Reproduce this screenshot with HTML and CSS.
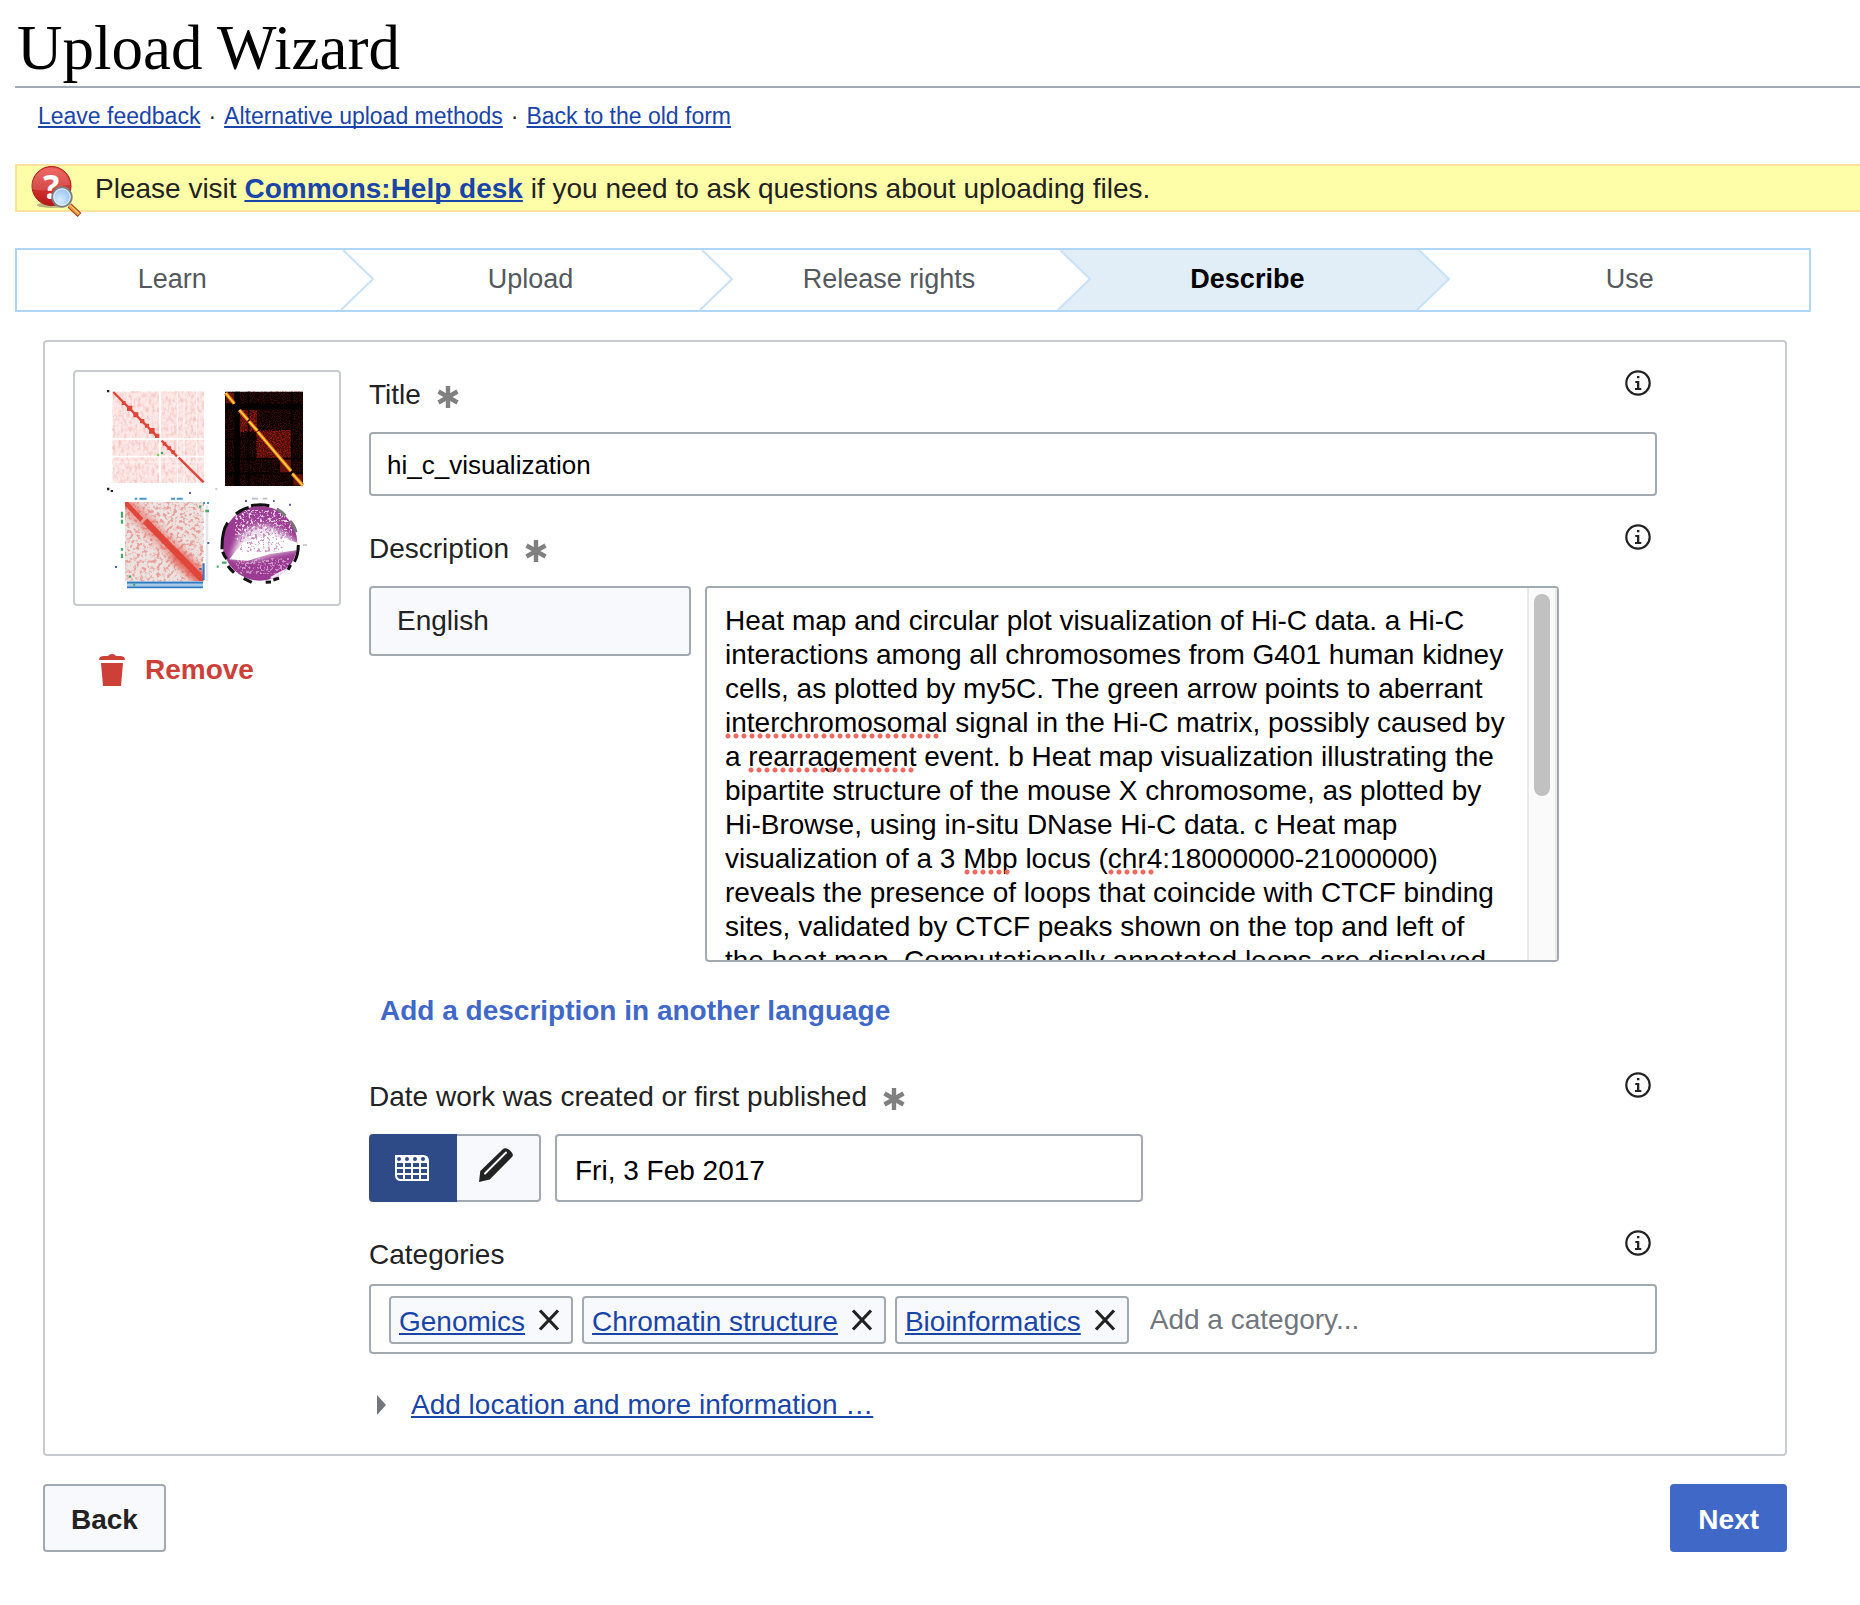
FILE: index.html
```
<!DOCTYPE html>
<html lang="en">
<head>
<meta charset="utf-8">
<meta name="viewport" content="width=device-width, initial-scale=1">
<title>Upload Wizard</title>
<link rel="stylesheet" href="styles.css">
</head>
<body>
<svg class="sprite" aria-hidden="true">
  <symbol id="icon-info" viewBox="0 0 26 26">
    <circle cx="13" cy="13" r="11.7" fill="none" stroke="#222" stroke-width="2.2"/>
    <path d="M12 6h2.4v2.2H12zM10.3 11h4v7h2v2h-6.3v-2h2v-5h-1.7z" fill="#222"/>
  </symbol>
  <symbol id="icon-required" viewBox="0 0 22 24">
    <path d="M11 1v22M1.500 6.500l19 11M20.500 6.500l-19 11" fill="none" stroke="#808080" stroke-width="4.400"/>
  </symbol>
  <symbol id="icon-close" viewBox="0 0 22 22">
    <path d="M2 1.500l18 19M20 1.500l-18 19" fill="none" stroke="#222" stroke-width="3.200"/>
  </symbol>
</svg>

<header>
  <h1 class="page-title">Upload Wizard</h1>
  <p class="sub-links"><a href="#feedback">Leave feedback</a><span>·</span><a href="#methods">Alternative upload methods</a><span>·</span><a href="#old">Back to the old form</a></p>
  <div class="notice">
    <svg class="notice-icon" viewBox="0 0 52 52" aria-hidden="true">
      <defs>
        <linearGradient id="red" x1="0" y1="0" x2="0" y2="1"><stop offset="0" stop-color="#ee5550"/><stop offset="1" stop-color="#b81716"/></linearGradient>
        <radialGradient id="lens" cx=".4" cy=".65" r=".7"><stop offset="0" stop-color="#d8ecff"/><stop offset="1" stop-color="#8fbcf0"/></radialGradient>
      </defs>
      <ellipse cx="21" cy="39" rx="15" ry="3" fill="#8a8660" opacity=".6"/>
      <circle cx="20.500" cy="20" r="19.500" fill="url(#red)" stroke="#a81817" stroke-width="1"/>
      <path d="M1 23a19 19 0 0 1 38-4c-10-1-16 9-38 4z" fill="#fff" opacity=".13"/>
      <text x="20" y="33" text-anchor="middle" class="notice-mark">?</text>
      <path d="M38.500 39.500l10 9.500" stroke="#a33a12" stroke-width="5.500"/>
      <path d="M38.500 39.500l9.300 8.800" stroke="#f79a3c" stroke-width="3.500"/>
      <path d="M39.500 39.500l9 8.500" stroke="#ffe08a" stroke-width="1"/>
      <circle cx="31" cy="31" r="9.700" fill="url(#lens)" stroke="#7b8088" stroke-width="2"/>
      <circle cx="31" cy="31" r="8.200" fill="none" stroke="#fff" stroke-width="1" opacity=".8"/>
    </svg>
    <p>Please visit <a href="#helpdesk"><b>Commons:Help desk</b></a> if you need to ask questions about uploading files.</p>
  </div>
</header>

<main class="wizard">
  <ol class="steps">
    <li>Learn<svg class="arrow" viewBox="0 0 34 60" preserveAspectRatio="none"><path d="M2 0l30 29L0 60" class="arrow-line"/></svg></li>
    <li>Upload<svg class="arrow" viewBox="0 0 34 60" preserveAspectRatio="none"><path d="M2 0l30 29L0 60" class="arrow-line"/></svg></li>
    <li>Release rights<svg class="arrow" viewBox="0 0 34 60" preserveAspectRatio="none"><path d="M2 0h33v60H0l32-31z" fill="#e1eef8"/><path d="M2 0l30 29L0 60" class="arrow-line"/></svg></li>
    <li class="current" aria-current="step">Describe<svg class="arrow" viewBox="0 0 34 60" preserveAspectRatio="none"><path d="M2 0h33v60H0l32-31z" fill="#fff"/><path d="M2 0l30 29L0 60" class="arrow-line"/></svg></li>
    <li>Use</li>
  </ol>

  <form class="stage">
    <section class="card">
      <div class="file">
        <svg class="thumb" viewBox="45 36 792 696" role="img" aria-label="hi_c_visualization">
          <defs>
            <filter id="noise-a" x="0" y="0" width="1" height="1" color-interpolation-filters="sRGB"><feTurbulence type="fractalNoise" baseFrequency=".12 .07" numOctaves="2" seed="4"/><feColorMatrix values="0 0 0 0 .93  0 0 0 0 .6  0 0 0 0 .57  2.600 0 0 0 -1.100"/></filter>
            <filter id="noise-b" x="0" y="0" width="1" height="1" color-interpolation-filters="sRGB"><feTurbulence type="fractalNoise" baseFrequency=".3" numOctaves="2" seed="9"/><feColorMatrix values="0 0 0 0 .6  0 0 0 0 .1  0 0 0 0 .06  5 0 0 0 -2.300"/></filter>
            <filter id="noise-c" x="0" y="0" width="1" height="1" color-interpolation-filters="sRGB"><feTurbulence type="fractalNoise" baseFrequency=".1" numOctaves="2" seed="2"/><feColorMatrix values="0 0 0 0 .91  0 0 0 0 .42  0 0 0 0 .39  5 0 0 0 -2.400"/></filter>
            <filter id="noise-d" x="0" y="0" width="1" height="1" color-interpolation-filters="sRGB"><feTurbulence type="fractalNoise" baseFrequency=".15" numOctaves="2" seed="7"/><feColorMatrix values="0 0 0 0 1  0 0 0 0 1  0 0 0 0 1  8 0 0 0 -4.100"/></filter>
            <filter id="noise-e" x="0" y="0" width="1" height="1" color-interpolation-filters="sRGB"><feTurbulence type="fractalNoise" baseFrequency=".13" numOctaves="2" seed="3"/><feColorMatrix values="0 0 0 0 .66  0 0 0 0 .32  0 0 0 0 .62  8 0 0 0 -4.300"/></filter>
            <filter id="soft" x="-.3" y="-.3" width="1.600" height="1.600"><feGaussianBlur stdDeviation="9"/></filter>
            <clipPath id="disc"><circle cx="600" cy="550" r="112"/></clipPath>
            <clipPath id="square-c"><path d="M195 426h235v238H195z"/></clipPath>
          </defs>

          <path d="M158 95h274v273H158z" fill="#fce9e8"/>
          <path d="M158 95h274v273H158z" filter="url(#noise-a)" opacity=".45"/>
          <path d="M300 95v273M158 237h274M158 290h274" stroke="#fff" stroke-width="5"/>
          <path d="M352 95v273M372 95v273M158 306h274M410 95v273" stroke="#fff" stroke-width="2"/>
          <path d="M160 96l134 136M305 242l46 47M356 293l75 74" stroke="#e0453a" stroke-width="7"/>
          <path d="M185 123h12v12h-12zM201 137h16v16h-16zM220 157h15v15h-15zM240 177h13v13h-13zM255 191h12v12h-12zM267 204h17v17h-17zM285 221h13v13h-13zM308 246h11v11h-11zM322 259h11v11h-11zM334 271h11v11h-11z" fill="#e0453a"/>
          <circle cx="294" cy="285" r="4" fill="#7bd04c"/><circle cx="306" cy="279" r="4" fill="#3f9e62"/>
          <path d="M141 90h7v7h-7zM141 383h7v8h-7zM152 390h7v6h-7z" fill="#222"/>

          <path d="M495 95h234v283H495z" fill="#080101"/>
          <path d="M590 212h105v84H590zM536 150h55v64h-55z" fill="#4a0d0a"/>
          <path d="M498 98h28v32h-28zM660 296h36v42h-36zM700 340h28v36h-28z" fill="#5e120c"/>
          <path d="M495 95h234v283H495z" filter="url(#noise-b)" opacity=".35"/>
          <path d="M536 150h55v64h-55z" filter="url(#noise-b)"/>
          <path d="M590 212h105v84H590z" filter="url(#noise-b)" opacity=".9"/>
          <path d="M495 140h234M531 95v283" stroke="#050000" stroke-width="17"/>
          <path d="M566 95v283M495 238h95M495 296h234M695 95v283M495 340h234" stroke="#050000" stroke-width="5"/>
          <path d="M497 99l26 32M538 150l26 30M567 184l25 28M593 215l100 118M697 341l31 35" stroke="#e9651b" stroke-width="11"/>
          <path d="M497 99l26 32M538 150l26 30M567 184l25 28M593 215l100 118M697 341l31 35" stroke="#ffd93f" stroke-width="5"/>

          <path d="M195 426h235v238H195z" fill="#ece3e1"/>
          <path d="M195 426h235v238H195z" filter="url(#noise-c)" opacity=".55"/>
          <g clip-path="url(#square-c)">
            <path d="M190 420l250 250" stroke="#e4483c" stroke-width="46" opacity=".45" filter="url(#soft)"/>
            <path d="M195 426l50 54" stroke="#e0463a" stroke-width="14"/>
            <path d="M255 482l180 184" stroke="#e0463a" stroke-width="19"/>
            <path d="M340 580l100 94" stroke="#e0463a" stroke-width="36" opacity=".6" filter="url(#soft)"/>
          </g>
          <path d="M201 664h228v20H201z" fill="#a9c9e6"/><path d="M201 668h228M201 682h228" stroke="#2f7cc4" stroke-width="5"/>
          <path d="M224 416h8M238 416h22M333 416h12M350 416h18M429 429h6M441 429h6" stroke="#4a94cf" stroke-width="6"/>
          <path d="M441 436v226" stroke="#e4e6ee" stroke-width="8"/>
          <path d="M431 610v50" stroke="#2f7cc4" stroke-width="6"/>
          <path d="M186 455v18M186 479v12M186 564v8M186 581v13" stroke="#46ab68" stroke-width="7"/>
          <path d="M436 453h11M219 674h7M207 650h7M417 440h7M470 620h6M486 608h14" stroke="#46ab68" stroke-width="7"/>
          <path d="M165 621h6M387 399h6M442 549h6M555 423h6M639 423h5M687 434h6M418 627h7" stroke="#5560a8" stroke-width="6"/>
          <path d="M576 416h18M608 416h14M729 555h12M466 387h6" stroke="#b9bcc9" stroke-width="5"/>

          <circle cx="600" cy="550" r="112" fill="#9c3b93"/>
          <g clip-path="url(#disc)">
            <path d="M525 450h170v90H525z" filter="url(#noise-d)" opacity=".75"/>
            <path d="M530 595h160v45H530z" filter="url(#noise-d)" opacity=".45"/>
            <path d="M512 594l24-64 40-30 46-4 40 18 50 36v18l-70 14-50 14z" fill="#fff" filter="url(#soft)" opacity=".85"/>
            <path d="M508 598l38-48 80-28 88 26v22l-85 12-66 20z" fill="#fff"/>
            <path d="M540 470h130v105H540z" filter="url(#noise-e)" opacity=".6"/>
            <path d="M632 650l30-16 40-20v50h-70z" fill="#fff" opacity=".85"/>
          </g>
          <g fill="none" stroke="#111" stroke-width="9">
            <path d="M573 437q27-5 55 0M528 462q16-14 38-20M503 488q-18 26-17 80M488 575q4 12 12 22M504 618q8 11 18 20M551 655l24 12M617 667l16-1M640 660l17-6M715 555q0 30-12 50M692 615l-8 14"/>
            <path d="M650 447q16 8 26 20M690 483q14 14 18 34" stroke="#777"/>
          </g>
        </svg>
        <button type="button" class="remove">
          <svg viewBox="0 0 26 32" width="26" height="32" aria-hidden="true"><path d="M0 6q0-4 5-4h4q1-2 4-2t4 2h4q5 0 5 4zM2 9h22l-2 23H4z" fill="#cc4038"/></svg>
          Remove
        </button>
      </div>

      <div class="fields">
        <div class="field">
          <div class="field-head">
            <label for="title">Title</label><svg class="required" aria-hidden="true"><use href="#icon-required"/></svg>
            <button type="button" class="info" aria-label="About the title"><svg><use href="#icon-info"/></svg></button>
          </div>
          <input id="title" class="box title-input" type="text" value="hi_c_visualization">
        </div>

        <div class="field">
          <div class="field-head">
            <label for="description">Description</label><svg class="required" aria-hidden="true"><use href="#icon-required"/></svg>
            <button type="button" class="info" aria-label="About the description"><svg><use href="#icon-info"/></svg></button>
          </div>
          <div class="description">
            <select class="box language" aria-label="Language"><option>English</option></select>
            <div class="box editor">
              <textarea id="description" spellcheck="false">Heat map and circular plot visualization of Hi-C data. a Hi-C interactions among all chromosomes from G401 human kidney cells, as plotted by my5C. The green arrow points to aberrant interchromosomal signal in the Hi-C matrix, possibly caused by a rearragement event. b Heat map visualization illustrating the bipartite structure of the mouse X chromosome, as plotted by Hi-Browse, using in-situ DNase Hi-C data. c Heat map visualization of a 3 Mbp locus (chr4:18000000-21000000) reveals the presence of loops that coincide with CTCF binding sites, validated by CTCF peaks shown on the top and left of the heat map. Computationally annotated loops are displayed</textarea>
              <div class="scroll-track"><div class="scroll-thumb"></div></div>
              <span class="misspelt misspelt-1"></span>
              <span class="misspelt misspelt-2"></span>
              <span class="misspelt misspelt-3"></span>
              <span class="misspelt misspelt-4"></span>
            </div>
          </div>
          <button type="button" class="add-language">Add a description in another language</button>
        </div>

        <div class="field">
          <div class="field-head">
            <label for="date">Date work was created or first published</label><svg class="required" aria-hidden="true"><use href="#icon-required"/></svg>
            <button type="button" class="info" aria-label="About the date"><svg><use href="#icon-info"/></svg></button>
          </div>
          <div class="date-row">
            <div class="toggle">
              <button type="button" class="toggle-on" aria-pressed="true" aria-label="Pick a date">
                <svg viewBox="0 0 34 26" width="34" height="26"><path d="M0 0h28q6 0 6 6v20H6q-6 0-6-6z" fill="#fff"/><g fill="#2f4b87"><circle cx="4" cy="4" r="2"/><circle cx="12" cy="4" r="2"/><circle cx="20" cy="4" r="2"/><circle cx="28" cy="4" r="2"/><path d="M2 8h6v4H2zM10 8h6v4h-6zM18 8h6v4h-6zM26 8h6v4h-6zM2 14h6v4H2zM10 14h6v4h-6zM18 14h6v4h-6zM26 14h6v4h-6zM2 20h6v4H5q-3-1-3-4zM10 20h6v4h-6zM18 20h6v4h-6zM26 20h6v4h-6z"/></g></svg>
              </button>
              <button type="button" class="toggle-off" aria-pressed="false" aria-label="Type a date">
                <svg viewBox="0 0 34 34" width="34" height="34"><path d="M0 34l1.300-11L23.500 1.500q3-3 7.500 1t2 6.500L10.700 31.500z" fill="#222"/><path d="M6 25.500L27 4.500" stroke="#f8f9fa" stroke-width="2" stroke-linecap="round"/></svg>
              </button>
            </div>
            <input id="date" class="box date-input" type="text" value="Fri, 3 Feb 2017">
          </div>
        </div>

        <div class="field">
          <div class="field-head field-head-short">
            <label for="category">Categories</label>
            <button type="button" class="info" aria-label="About categories"><svg><use href="#icon-info"/></svg></button>
          </div>
          <div class="box categories">
            <span class="tag"><a href="#genomics">Genomics</a><button type="button" aria-label="Remove Genomics"><svg><use href="#icon-close"/></svg></button></span>
            <span class="tag"><a href="#chromatin">Chromatin structure</a><button type="button" aria-label="Remove Chromatin structure"><svg><use href="#icon-close"/></svg></button></span>
            <span class="tag"><a href="#bioinformatics">Bioinformatics</a><button type="button" aria-label="Remove Bioinformatics"><svg><use href="#icon-close"/></svg></button></span>
            <input id="category" type="text" placeholder="Add a category...">
          </div>
          <p class="more"><a href="#more">Add location and more information …</a></p>
        </div>
      </div>
    </section>

    <div class="actions">
      <button type="button" class="button">Back</button>
      <button type="submit" class="button button-primary">Next</button>
    </div>
  </form>
</main>
</body>
</html>
```
FILE: styles.css
```
* {
  box-sizing: border-box;
}

body {
  margin: 0;
  padding: 12px 0 48px 15px;
  background: #fff;
  color: #222;
  font: 28px/34px "Liberation Sans", Arial, sans-serif;
}

p {
  margin: 0;
}

a {
  color: #1a45a8;
  text-decoration: underline;
  text-decoration-thickness: 2px;
  text-decoration-skip-ink: none;
  text-underline-offset: 2px;
}

button,
input,
select,
textarea {
  margin: 0;
  padding: 0;
  border: 0;
  background: none;
  color: inherit;
  font: inherit;
}

svg {
  display: block;
}

.sprite {
  position: absolute;
  width: 0;
  height: 0;
}

/* Header */

.page-title {
  margin: 0;
  padding: 0 2px 2px;
  border-bottom: 2px solid #a2a9b5;
  color: #000;
  font: 63px/72px "Liberation Serif", Georgia, serif;
}

.sub-links {
  display: flex;
  gap: 8px;
  padding: 13px 23px 33px;
  font-size: 23px;
  line-height: 30px;
}

.notice {
  display: flex;
  align-items: center;
  gap: 12px;
  height: 48px;
  padding-left: 14px;
  border: 2px solid #fce29a;
  border-right: 0;
  background: #fffea8;
}

.notice p {
  padding-top: 2px;
}

.notice-icon {
  flex: none;
  width: 52px;
  height: 52px;
  margin-top: 8px;
  overflow: visible;
}

.notice-mark {
  fill: #fff;
  font: bold 34px "Noto Sans", "DejaVu Sans", sans-serif;
}

/* Progress steps */

.wizard {
  margin-right: 49px;
}

.steps {
  display: grid;
  grid-template-columns: repeat(5, 1fr);
  margin: 36px 0 28px;
  padding: 0;
  border: 2px solid #b0d6f5;
  color: #54595d;
  font-size: 27px;
  list-style: none;
  text-align: center;
}

.steps li {
  position: relative;
  padding: 12px 48px 14px 0;
}

.steps li:last-child {
  padding-right: 0;
}

.steps .current {
  background: #e1eef8;
  color: #000;
  font-weight: bold;
}

.arrow {
  position: absolute;
  top: 0;
  right: 0;
  width: 34px;
  height: 100%;
  overflow: visible;
}

.arrow-line {
  fill: none;
  stroke: #c8e2f9;
  stroke-width: 2;
}

/* Upload card */

.stage {
  margin: 0 24px 0 28px;
}

.card {
  display: grid;
  grid-template-columns: 268px minmax(0, 1fr);
  gap: 28px;
  padding: 28px 128px 32px 28px;
  border: 2px solid #c8ccd1;
  border-radius: 4px;
}

.thumb {
  width: 268px;
  height: 236px;
  border: 2px solid #c8ccd1;
  border-radius: 4px;
}

.remove {
  display: flex;
  align-items: center;
  gap: 20px;
  margin: 47px 0 0 26px;
  color: #cc4038;
  font-weight: bold;
}

.fields {
  display: flex;
  flex-direction: column;
  gap: 28px;
}

.field-head {
  display: flex;
  align-items: flex-start;
  height: 62px;
}

.field-head-short {
  height: 54px;
}

.field-head label {
  padding-top: 8px;
}

.required {
  width: 22px;
  height: 24px;
  margin: 15px 0 0 16px;
}

.info {
  margin: 0 6px 0 auto;
}

.info svg {
  width: 26px;
  height: 26px;
}

.box {
  border: 2px solid #a2a9b1;
  border-radius: 4px;
  background: #fff;
  color: #000;
}

.title-input {
  display: block;
  width: 100%;
  height: 64px;
  padding: 2px 16px 0;
  font-size: 26px;
}

.description {
  display: flex;
  align-items: flex-start;
  gap: 14px;
  margin-right: 98px;
}

.language {
  flex: none;
  width: 322px;
  height: 70px;
  padding: 0 26px;
  background: #f8f9fc;
  color: #222;
  appearance: none;
}

.editor {
  position: relative;
  display: flex;
  flex: 1;
  height: 376px;
}

.editor textarea {
  flex: 1;
  min-width: 0;
  padding: 16px 20px 0 18px;
  overflow: hidden;
  resize: none;
}

.scroll-track {
  width: 30px;
  padding: 6px 5px;
  border: solid #e8e8e8;
  border-width: 0 2px;
  background: #fafafa;
}

.scroll-thumb {
  width: 16px;
  height: 202px;
  border-radius: 8px;
  background: #c1c1c1;
}

/* Spelling marks that lie over the textarea's words */

.misspelt {
  position: absolute;
  height: 6px;
  background: radial-gradient(circle at 3px 3px, #ee6a60 2px, transparent 3px) repeat-x 0 0 / 8px 6px;
  pointer-events: none;
}

.misspelt-1 {
  top: 145px;
  left: 18px;
  width: 216px;
}

.misspelt-2 {
  top: 179px;
  left: 41px;
  width: 168px;
}

.misspelt-3 {
  top: 281px;
  left: 257px;
  width: 48px;
}

.misspelt-4 {
  top: 281px;
  left: 401px;
  width: 48px;
}

.add-language {
  display: block;
  margin: 32px 0 16px 11px;
  color: #4068c7;
  font-weight: bold;
}

.date-row {
  display: flex;
  gap: 14px;
}

.toggle {
  display: flex;
}

.toggle button {
  display: flex;
  align-items: center;
  justify-content: center;
  height: 68px;
}

.toggle-on {
  width: 88px;
  padding-right: 2px;
  border-radius: 4px 0 0 4px;
  background: #2f4b87;
}

.toggle-off {
  width: 84px;
  padding: 0 4px 6px 0;
  border: solid #a2a9b1;
  border-width: 2px 2px 2px 0;
  border-radius: 0 4px 4px 0;
  background: #f8f9fc;
}

.date-input {
  width: 588px;
  height: 68px;
  padding: 6px 18px 0;
}

.categories {
  display: flex;
  align-items: center;
  gap: 9px;
  height: 70px;
  padding: 2px 18px 0;
}

.tag {
  display: flex;
  align-items: center;
  gap: 13px;
  height: 48px;
  padding: 0 11px 0 8px;
  border: 2px solid #a2a9b1;
  border-radius: 4px;
  background: #f8f9fc;
}

.tag a {
  padding-top: 4px;
}

.tag svg {
  width: 22px;
  height: 22px;
}

.categories input {
  flex: 1;
  min-width: 0;
  padding-left: 12px;
}

.categories input::placeholder {
  color: #72777d;
  opacity: 1;
}

.more {
  display: flex;
  align-items: center;
  gap: 25px;
  margin: 34px 0 0 8px;
}

.more::before {
  content: "";
  border: solid transparent;
  border-width: 10px 0 10px 9px;
  border-left-color: #72777d;
}

/* Navigation buttons */

.actions {
  display: flex;
  justify-content: space-between;
  margin-top: 28px;
}

.button {
  height: 68px;
  padding: 4px 26px 0;
  border: 2px solid #a2a9b1;
  border-radius: 4px;
  background: #f8f9fc;
  font-weight: bold;
}

.button-primary {
  border-color: #4068c7;
  background: #4068c7;
  color: #fff;
}
```
